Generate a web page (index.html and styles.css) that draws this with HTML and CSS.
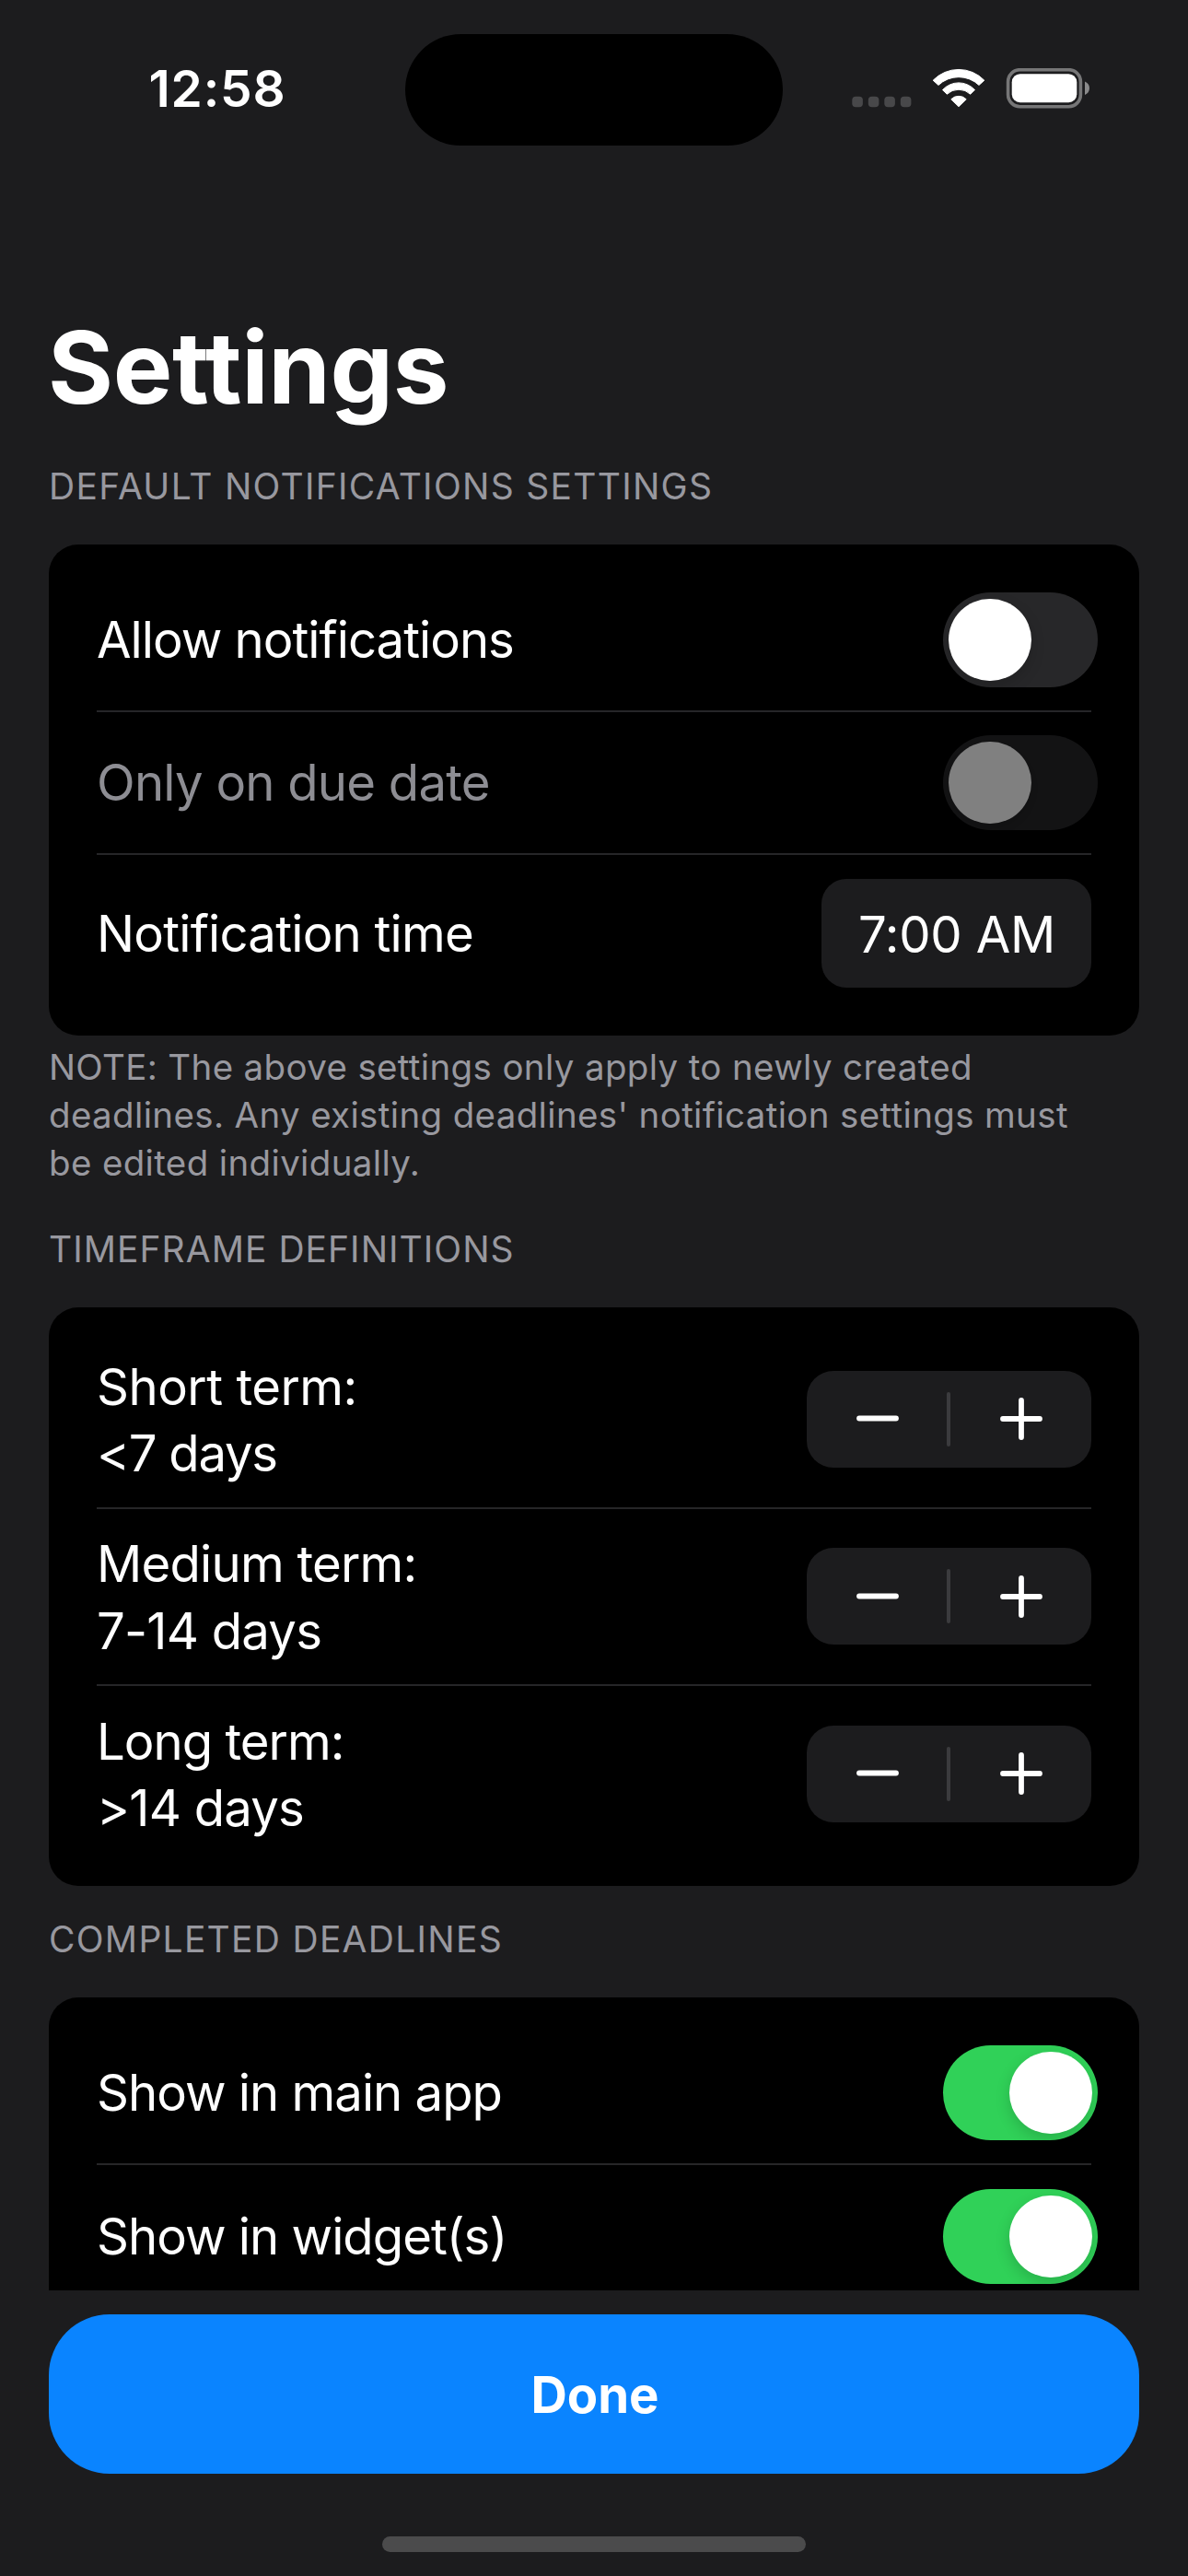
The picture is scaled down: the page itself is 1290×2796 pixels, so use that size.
FILE: index.html
```html
<!DOCTYPE html>
<html lang="en">
<head>
<meta charset="utf-8">
<title>Settings</title>
<link rel="stylesheet" href="styles.css">
</head>
<body>
<svg class="sprite" aria-hidden="true">
  <symbol id="minus" viewBox="0 0 46 46"><path d="M3 22.5H43"/></symbol>
  <symbol id="plus" viewBox="0 0 46 46"><path d="M3 23H43M23 3V43"/></symbol>
</svg>
<div class="screen">
  <header class="status-bar">
    <div class="clock">12:58</div>
    <div class="island"></div>
    <svg class="status-icons" viewBox="0 0 260 44" aria-hidden="true">
      <g fill="#48484a">
        <rect x=".3" y="30.7" width="11.6" height="11.6" rx="4"/>
        <rect x="17.8" y="30.7" width="11.6" height="11.6" rx="4"/>
        <rect x="35.3" y="30.7" width="11.6" height="11.6" rx="4"/>
        <rect x="52.8" y="30.7" width="11.6" height="11.6" rx="4"/>
      </g>
      <g fill="#fff" stroke="#fff" stroke-width="1" stroke-linejoin="round">
        <path d="M88.2 13.2A38.7 38.7 0 0 1 143.8 13.2L138 18.4A32 32 0 0 0 94 18.4Z"/>
        <path d="M98.5 23.6A23.7 23.7 0 0 1 133.5 23.6L128.7 28.2A18.6 18.6 0 0 0 103.3 28.2Z"/>
        <path d="M107.8 33.8A11.5 11.5 0 0 1 124.2 33.8L116 41.7Z"/>
      </g>
      <rect x="169.6" y="1.7" width="78.8" height="40" rx="13" fill="none" stroke="#767677" stroke-width="3.6"/>
      <rect x="173.7" y="6.2" width="70.6" height="31" rx="9" fill="#fff"/>
      <path d="M253 14.5C256 15.7 258 18.4 258 21.7S256 27.7 253 28.9Z" fill="#8a8a8b"/>
    </svg>
  </header>

  <main class="content">
    <h1 class="title">Settings</h1>

    <h2 class="section-title">DEFAULT NOTIFICATIONS SETTINGS</h2>
    <section class="card">
      <div class="row">
        <span class="label tight">Allow notifications</span>
        <span class="toggle"><span class="knob"></span></span>
      </div>
      <div class="row disabled">
        <span class="label medium">Only on due date</span>
        <span class="toggle"><span class="knob"></span></span>
      </div>
      <div class="row tall">
        <span class="label medium">Notification time</span>
        <span class="time">7:00 AM</span>
      </div>
    </section>
    <p class="note">NOTE: The above settings only apply to newly created<br>deadlines. Any existing deadlines' notification settings must<br>be edited individually.</p>

    <h2 class="section-title after-note">TIMEFRAME DEFINITIONS</h2>
    <section class="card steps">
      <div class="row">
        <div class="label two-line"><span class="loose">Short term:</span><span class="tighter">&lt;7 days</span></div>
        <div class="stepper"><svg class="sign"><use href="#minus"/></svg><i class="bar"></i><svg class="sign"><use href="#plus"/></svg></div>
      </div>
      <div class="row">
        <div class="label two-line"><span class="medium">Medium term:</span><span class="medium">7-14 days</span></div>
        <div class="stepper"><svg class="sign"><use href="#minus"/></svg><i class="bar"></i><svg class="sign"><use href="#plus"/></svg></div>
      </div>
      <div class="row">
        <div class="label two-line"><span class="tight">Long term:</span><span class="medium">&gt;14 days</span></div>
        <div class="stepper"><svg class="sign"><use href="#minus"/></svg><i class="bar"></i><svg class="sign"><use href="#plus"/></svg></div>
      </div>
    </section>

    <h2 class="section-title after-card">COMPLETED DEADLINES</h2>
    <section class="card">
      <div class="row">
        <span class="label tight">Show in main app</span>
        <span class="toggle on"><span class="knob"></span></span>
      </div>
      <div class="row">
        <span class="label tight">Show in widget(s)</span>
        <span class="toggle on"><span class="knob"></span></span>
      </div>
    </section>
  </main>

  <footer class="footer">
    <button class="done" type="button">Done</button>
    <div class="home-indicator"></div>
  </footer>
</div>
</body>
</html>
```
FILE: styles.css
```css
* {
  box-sizing: border-box;
}

body {
  margin: 0;
  background: #1c1c1e;
  color: #fff;
  font-family: Inter, "Liberation Sans", sans-serif;
}

.sprite {
  display: none;
}

.screen {
  display: flex;
  flex-direction: column;
  width: 1290px;
  height: 2796px;
  overflow: hidden;
}

/* Status bar */
.status-bar {
  display: grid;
  grid-template-columns: 440px 410px 440px;
  padding-top: 37px;
}

.clock {
  padding-left: 32px;
  text-align: center;
  font-size: 55px;
  font-weight: 600;
  line-height: 119px;
  letter-spacing: 0.84px;
}

.island {
  height: 121px;
  border-radius: 61px;
  background: #000;
}

.status-icons {
  width: 260px;
  height: 44px;
  margin: 37px 0 0 75px;
}

/* Scrolling content */
.content {
  flex: 1;
  min-height: 0;
  overflow: hidden;
  padding: 181px 53px 0;
}

.title {
  margin: 0 0 43px -1px;
  font-size: 108.5px;
  font-weight: 700;
  line-height: 120px;
  letter-spacing: -0.3px;
}

.section-title {
  margin: 0 0 37px;
  font-size: 39px;
  font-weight: 400;
  line-height: 52px;
  letter-spacing: 1.28px;
  color: #98989f;
}

.section-title.after-note {
  margin-top: 41px;
  letter-spacing: 1.04px;
}

.section-title.after-card {
  margin-top: 32px;
}

.card {
  padding: 27px 52.5px 26px 52px;
  border-radius: 32px;
  background: #000;
}

.row {
  display: flex;
  align-items: center;
  justify-content: space-between;
  height: 155px;
  border-bottom: 2px solid #262628;
}

.row.tall {
  height: 170px;
}

.row:last-child {
  border-bottom: 0;
}

.label {
  font-size: 54.5px;
  line-height: 72.4px;
}

.tighter {
  letter-spacing: -1.3px;
}

.tight {
  letter-spacing: -1px;
}

.medium {
  letter-spacing: -0.78px;
}

.loose {
  letter-spacing: -0.5px;
}

.disabled .label {
  color: #8d8d93;
}

.two-line {
  display: flex;
  flex-direction: column;
  padding-top: 2px;
}

.steps {
  padding-top: 26.5px;
}

.steps .row {
  height: 192.4px;
}

.steps .row:last-child {
  height: 191px;
}

.toggle {
  display: flex;
  width: 168.5px;
  height: 102.5px;
  margin-right: -7.5px;
  padding: 6.5px;
  border-radius: 52px;
  background: #272729;
}

.toggle.on {
  justify-content: flex-end;
  background: #30d158;
}

.disabled .toggle {
  opacity: 0.5;
}

.knob {
  width: 89.5px;
  height: 89.5px;
  border-radius: 50%;
  background: #fff;
  box-shadow: 0 6px 16px rgba(0, 0, 0, 0.16);
}

.time {
  width: 293px;
  height: 118px;
  padding: 2px 0 0 2px;
  border-radius: 27px;
  background: #1c1c1e;
  text-align: center;
  font-size: 54.5px;
  line-height: 116px;
  letter-spacing: -0.2px;
}

.note {
  margin: 8px 0 0;
  font-size: 38.5px;
  line-height: 52.2px;
  letter-spacing: 0.35px;
  color: #98989f;
}

.stepper {
  display: flex;
  align-items: center;
  justify-content: space-between;
  width: 309px;
  height: 105.5px;
  padding: 0 53px 0 54px;
  border-radius: 29px;
  background: #1c1c1e;
}

.sign {
  width: 46px;
  height: 46px;
  fill: none;
  stroke: #fff;
  stroke-width: 5.8px;
  stroke-linecap: round;
}

.bar {
  width: 4px;
  height: 59px;
  margin-right: 2px;
  border-radius: 2px;
  background: #3b3b3e;
}

/* Bottom bar */
.footer {
  display: flex;
  flex-direction: column;
  align-items: center;
  height: 310px;
  padding: 26px 53px 0;
}

.done {
  width: 100%;
  height: 172.5px;
  padding: 2px 0 0 2px;
  border: 0;
  border-radius: 66px;
  background: #0a84ff;
  color: #fff;
  font: 700 54.5px Inter, "Liberation Sans", sans-serif;
}

.home-indicator {
  width: 460px;
  height: 17px;
  margin-top: 68px;
  border-radius: 9px;
  background: #4b4b4c;
}
```
